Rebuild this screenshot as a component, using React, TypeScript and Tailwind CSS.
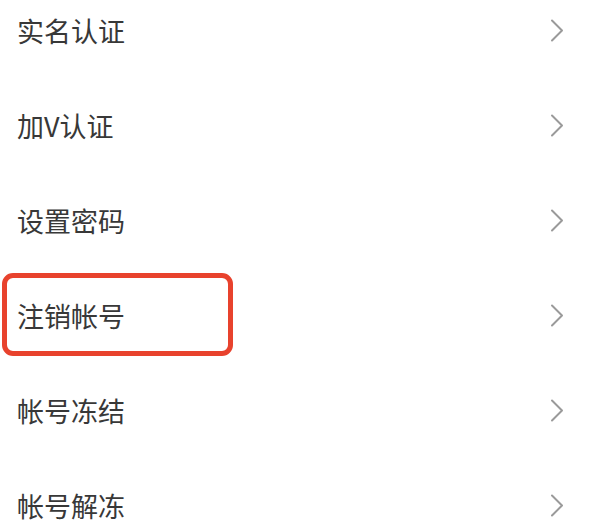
import { Fragment } from "react";

const items = ["实名认证", "加V认证", "设置密码", "注销帐号", "帐号冻结", "帐号解冻"];

function Chevron() {
  return (
    <svg width="14" height="23" viewBox="0 0 14 23" fill="none">
      <polyline points="2,1.5 12,11.5 2,21.5" stroke="#9a9a9a" strokeWidth="2" strokeLinecap="round" strokeLinejoin="round" />
    </svg>
  );
}

export default function App() {
  return (
    <div className="h-[532px] w-[598px] overflow-hidden bg-white">
      <ul className="-mt-[17px]" style={{ fontFamily: '"Noto Sans CJK SC", "Noto Sans", sans-serif' }}>
        {items.map((label, i) => (
          <Fragment key={label}>
            <li className="relative flex h-[95px] items-center justify-between pl-[17px] pr-[34px]">
              <span className="text-[27px] leading-none text-[#383838]">{label}</span>
              <Chevron />
              {i === 3 && (
                <div className="pointer-events-none absolute left-[2px] top-[5px] h-[83px] w-[231px] rounded-[11px] border-[5px] border-[#e8422d]" />
              )}
            </li>
          </Fragment>
        ))}
      </ul>
    </div>
  );
}
